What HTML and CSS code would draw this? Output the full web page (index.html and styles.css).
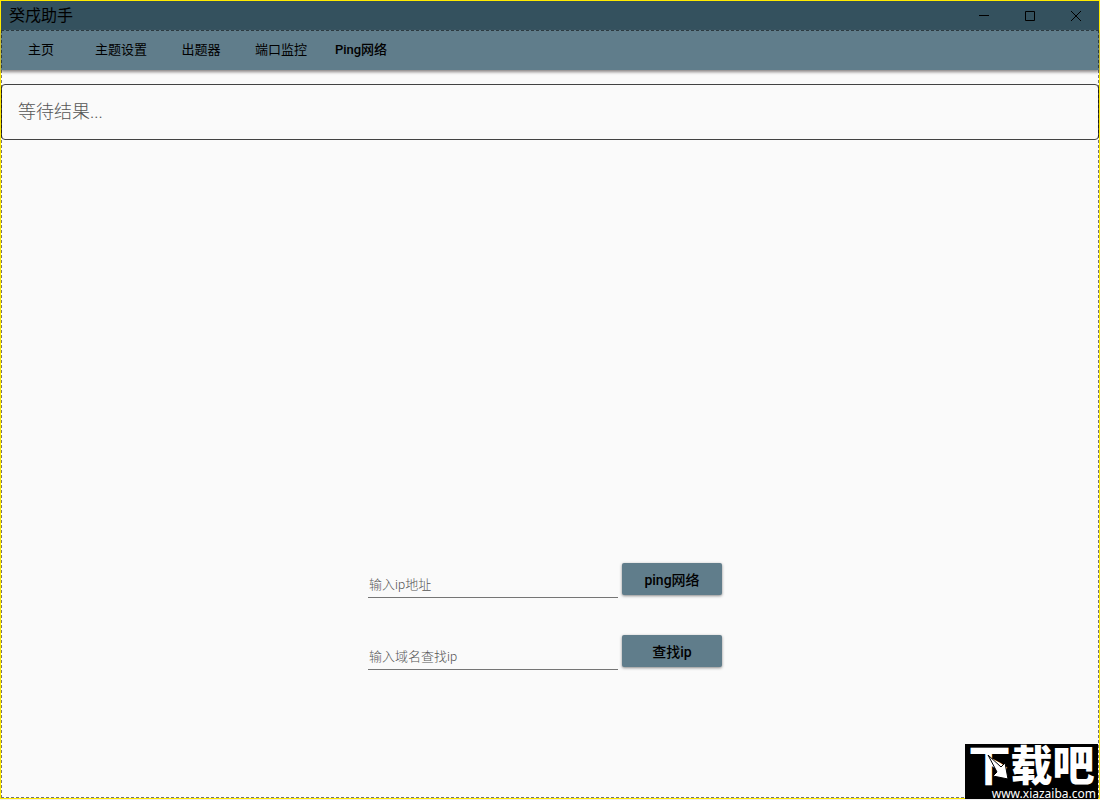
FILE: index.html
```html
<!DOCTYPE html>
<html lang="zh-CN">
<head>
<meta charset="utf-8">
<title>癸戌助手</title>
<link rel="stylesheet" href="styles.css">
</head>
<body>
<div class="window">
  <header class="titlebar">
    <h1 class="title">癸戌助手</h1>
    <div class="controls">
      <button class="control" type="button" aria-label="最小化"><svg width="12" height="12" viewBox="0 0 12 12"><path d="M1 5.5h10"/></svg></button>
      <button class="control" type="button" aria-label="最大化"><svg width="12" height="12" viewBox="0 0 12 12"><path d="M1.5 1.5h9v9h-9z"/></svg></button>
      <button class="control" type="button" aria-label="关闭"><svg width="12" height="12" viewBox="0 0 12 12"><path d="M1 1l10 10M11 1L1 11"/></svg></button>
    </div>
  </header>
  <div class="content">
    <nav class="tabs">
      <a class="tab" href="#home">主页</a>
      <a class="tab" href="#theme">主题设置</a>
      <a class="tab" href="#quiz">出题器</a>
      <a class="tab" href="#ports">端口监控</a>
      <a class="tab tab-latin" href="#ping">Ping网络</a>
    </nav>
    <main class="page">
      <input class="result" type="text" readonly placeholder="等待结果..." aria-label="结果">
      <form class="form">
        <div class="row">
          <input class="field" type="text" placeholder="输入ip地址" aria-label="输入ip地址">
          <button class="action" type="button">ping网络</button>
        </div>
        <div class="row">
          <input class="field" type="text" placeholder="输入域名查找ip" aria-label="输入域名查找ip">
          <button class="action" type="button">查找ip</button>
        </div>
      </form>
    </main>
  </div>
  <div class="watermark">
    <span class="brand">下载吧</span>
    <svg class="arrow" width="24" height="26" viewBox="0 0 24 26"><path d="M1 0L14 12L18 8L21 24L6 21L10 17Z"/></svg>
    <span class="site">www.xiazaiba.com</span>
  </div>
</div>
</body>
</html>
```
FILE: styles.css
```css
* {
  box-sizing: border-box;
}

body {
  margin: 0;
  font-family: Roboto, "Noto Sans CJK SC", sans-serif;
  background: #eee;
  color: #000;
}

.window {
  position: relative;
  display: flex;
  flex-direction: column;
  min-height: calc(100vh - 1px);
  border: 1px solid #ffea00;
  background: #fafafa;
}

.titlebar {
  display: flex;
  justify-content: space-between;
  height: 29px;
  background: #34515e;
}

.title {
  margin: 0;
  padding-left: 8px;
  font-size: 16px;
  font-weight: 400;
  line-height: 30px;
}

.controls {
  display: flex;
}

.control {
  display: grid;
  place-items: center;
  width: 46px;
  padding: 0;
  border: 0;
  background: none;
}

.control svg {
  fill: none;
  stroke: #000;
}

.content {
  display: flex;
  flex: 1;
  flex-direction: column;
  outline: 1px dashed #0008;
  outline-offset: -1px;
}

.tabs {
  display: flex;
  height: 40px;
  background: #607d8b;
  box-shadow: 0 2px 3px #8a8585;
}

.tab {
  width: 80px;
  font-size: 13px;
  font-weight: 400;
  line-height: 40px;
  text-align: center;
  color: #000;
  text-decoration: none;
}

.tab-latin {
  font-weight: 500;
}

.page {
  display: flex;
  flex: 1;
  flex-direction: column;
  justify-content: space-between;
  padding: 14px 0 128px;
}

.result {
  width: 100%;
  height: 56px;
  padding: 0 16px 2px;
  border: 1px solid #424242;
  border-radius: 4px;
  background: none;
  font: 300 18px Roboto, "Noto Sans CJK SC", sans-serif;
}

.form {
  display: flex;
  flex-direction: column;
  align-items: center;
  gap: 36px;
  margin-right: 10px;
}

.row {
  display: flex;
  gap: 4px;
}

.field {
  width: 250px;
  height: 36px;
  padding: 10px 1px 0;
  border: 0;
  border-bottom: 1px solid #757575;
  background: none;
  font: 300 13px Roboto, "Noto Sans CJK SC", sans-serif;
}

.result::placeholder,
.field::placeholder {
  color: #555;
  opacity: 1;
}

.action {
  width: 100px;
  height: 32px;
  margin-top: 1px;
  padding: 0;
  border: 0;
  border-radius: 2px;
  background: #607d8b;
  box-shadow: 0 1px 3px #888;
  color: #000;
  font: 500 14px Roboto, "Noto Sans CJK SC", sans-serif;
}

.watermark {
  position: absolute;
  right: 1px;
  bottom: -2px;
  display: flex;
  flex-direction: column;
  align-items: center;
  width: 133px;
  height: 56px;
  background: #000;
  color: #fff;
}

.brand {
  font: 900 42px/38px "Noto Sans CJK SC", sans-serif;
}

.arrow {
  position: absolute;
  top: 11px;
  left: 22px;
  fill: #fff;
  stroke: #000;
}

.site {
  align-self: flex-end;
  padding-right: 2px;
  font: 12px/24px "Noto Sans", sans-serif;
}
```
